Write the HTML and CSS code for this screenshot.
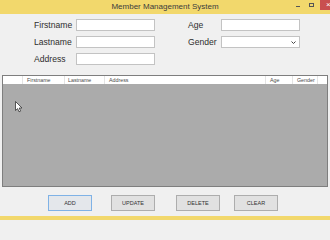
FILE: index.html
```html
<!DOCTYPE html>
<html lang="en">
<head>
<meta charset="utf-8">
<title>Member Management System</title>
<link rel="stylesheet" href="styles.css">
</head>
<body>
<div class="window">
  <header class="titlebar">
    <span class="title">Member Management System</span>
    <div class="controls">
      <span class="ctl-min"></span>
      <span class="ctl-max"></span>
      <span class="ctl-close">×</span>
    </div>
  </header>
  <main class="content">
    <form class="form">
      <label class="lbl">Firstname</label>
      <input class="field" type="text">
      <label class="lbl lbl-right">Age</label>
      <input class="field" type="text">
      <label class="lbl">Lastname</label>
      <input class="field" type="text">
      <label class="lbl lbl-right">Gender</label>
      <div class="field combo">
        <svg class="chev" width="5" height="3" viewBox="0 0 5 3"><path d="M0.5 0.5 L2.5 2.5 L4.5 0.5" fill="none" stroke="#444" stroke-width="1"/></svg>
      </div>
      <label class="lbl">Address</label>
      <input class="field" type="text">
    </form>
    <section class="datagrid">
      <div class="grid-head">
        <span class="cell c-row"></span>
        <span class="cell c-first">Firstname</span>
        <span class="cell c-last">Lastname</span>
        <span class="cell c-addr">Address</span>
        <span class="cell c-age">Age</span>
        <span class="cell c-gender">Gender</span>
      </div>
      <div class="grid-body"></div>
    </section>
    <div class="buttons">
      <button class="btn btn-add" type="button">ADD</button>
      <button class="btn btn-update" type="button">UPDATE</button>
      <button class="btn btn-delete" type="button">DELETE</button>
      <button class="btn btn-clear" type="button">CLEAR</button>
    </div>
  </main>
  <footer class="bottombar"></footer>
  <svg class="cursor" width="8" height="12" viewBox="0 0 8 12"><path d="M0.5 0.5 L0.5 9.5 L2.6 7.6 L4 10.8 L5.6 10.1 L4.2 7 L7 7 Z" fill="#fff" stroke="#333" stroke-width="0.8" stroke-linejoin="round"/></svg>
</div>
</body>
</html>
```
FILE: styles.css
```css
* { box-sizing: border-box; margin: 0; padding: 0; }
html, body { width: 330px; height: 220px; overflow: hidden; }
body { font-family: "Liberation Sans", Arial, sans-serif; background: #f0f0f0; color: #2b2b2b; }

.window { position: relative; display: flex; flex-direction: column; height: 220px; }

.titlebar { height: 14px; background: #f2d86c; display: grid; grid-template-columns: 1fr auto 1fr; align-items: start; }
.title { grid-column: 2; font-size: 8px; line-height: 14px; color: #3c3c3c; white-space: nowrap; }
.controls { grid-column: 3; justify-self: end; display: flex; align-items: flex-start; }
.ctl-min { width: 4px; height: 1px; background: #555; margin: 6px 9px 0 0; }
.ctl-max { width: 5px; height: 4px; border: 1px solid #555; border-top-width: 1.5px; margin: 3px 6px 0 0; }
.ctl-close { width: 10px; height: 10px; background: #c94f4f; color: #fff; font-size: 8px; line-height: 9px; padding-left: 6px; overflow: hidden; white-space: nowrap; }

.content { display: flex; flex-direction: column; }

.form { display: grid; grid-template-columns: 42px 79px 33px 33px 79px; grid-auto-rows: 12px; row-gap: 5px; padding: 5px 0 0 34px; align-items: center; }
.lbl { font-size: 8.6px; line-height: 12px; color: #2e2e2e; white-space: nowrap; }
.lbl-right { grid-column: 4; }
.field { height: 12px; border: 1px solid #c3c3c3; background: #fff; outline: none; }
.combo { display: flex; align-items: center; justify-content: flex-end; padding-right: 3px; }
.chev { display: block; }

.datagrid { margin: 10px 2px 0 2px; height: 112px; border: 1px solid #7e7e7e; background: #ababab; display: flex; flex-direction: column; }
.grid-head { display: flex; height: 8px; background: #fff; }
.cell { height: 8px; border-right: 1px solid #e4e4e4; font-size: 5.3px; line-height: 8px; padding-left: 4px; color: #4a4a4a; white-space: nowrap; overflow: hidden; }
.c-row { width: 20px; }
.c-first { width: 42px; }
.c-last { width: 40px; padding-left: 3px; }
.c-addr { width: 161px; }
.c-age { width: 27px; }
.c-gender { width: 25px; }
.grid-body { flex: 1; }

.buttons { display: flex; margin-top: 8px; height: 16px; }
.btn { width: 44px; height: 16px; border: 1px solid #adadad; background: #e1e1e1; font-family: "Liberation Sans", Arial, sans-serif; font-size: 5.5px; color: #333; }
.btn-add { margin-left: 48px; border-color: #7fb2e6; background: #e4e7eb; }
.btn-update { margin-left: 19px; }
.btn-delete { margin-left: 21px; }
.btn-clear { margin-left: 14px; }

.bottombar { margin-top: auto; height: 4px; background: #f2d86c; }

.cursor { position: absolute; left: 15px; top: 101px; }
```
